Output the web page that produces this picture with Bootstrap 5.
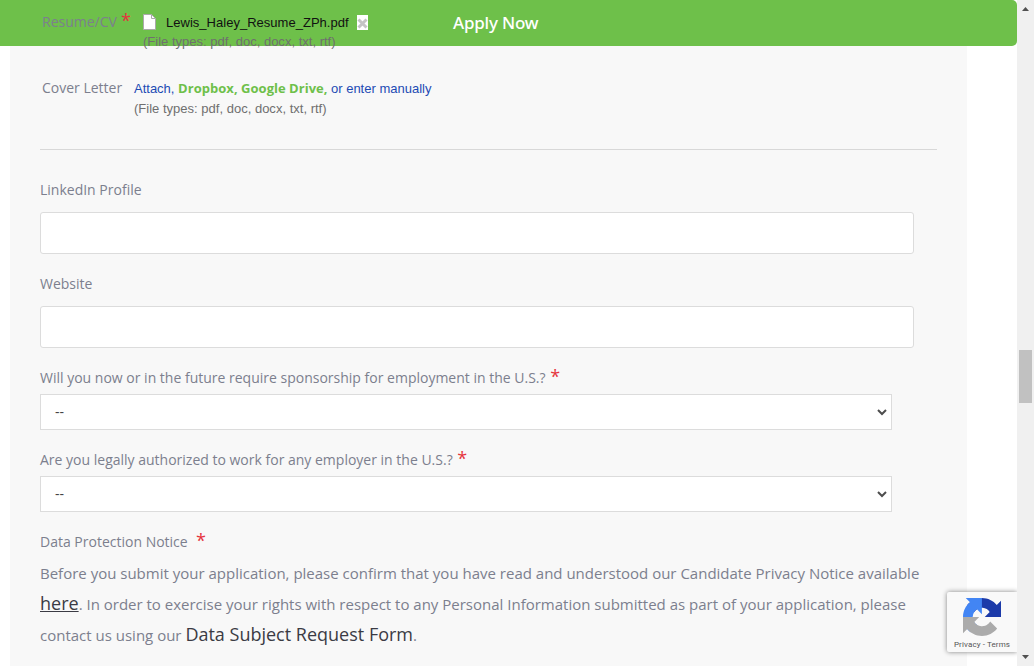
<!DOCTYPE html>
<html lang="en">
<head>
<meta charset="utf-8">
<title>Apply Now</title>
<link href="https://cdn.jsdelivr.net/npm/bootstrap@5.3.0/dist/css/bootstrap.min.css" rel="stylesheet">
<style>
body { font-family: "Open Sans", sans-serif; font-size: 14px; line-height: 20px; color: #7c7f8e; background: #fff; }
.page-area { width: 1017px; }
.apply-bar { height: 46px; background: #6ec04a; border-radius: 0 5px 5px 0; }
.apply-title { font: 500 17px/20px "Noto Sans", sans-serif; letter-spacing: -.2px; color: #fff; left: 453px; top: 13px; }
.form-panel { width: 957px; margin-left: 10px; padding: 12px 30px 0; background: #f8f8f8; }
.form-front { z-index: 2; }
.upload-row { padding-left: 2px; }
.arial-text { font-family: "Liberation Sans", sans-serif; font-size: 13px; }
.file-name { color: #111; margin-left: 10px; width: 191px; line-height: 18px; padding-top: 2px; letter-spacing: .02px; }
.types-note { color: #6f6f6f; letter-spacing: .01px; }
.blue-link { color: #1d4bb4; }
.green-link { color: #6ec04a; font-family: "Open Sans", sans-serif; font-weight: 700; font-size: 13px; letter-spacing: .03px; }
.star { color: #e5343d; font-size: 18px; line-height: 0; margin-left: 1px; }
.rule { height: 1px; background: #d8d8d8; margin-top: 30px; }
.field-label { display: block; height: 20px; }
.text-box { width: 874px; height: 42px; border: 1px solid #dcdcdc; border-radius: 3px; padding: 0 14px; margin: 12px 0 20px; }
.choice { width: 852px; height: 36px; border: 1px solid #dcdcdc; background: #fff; color: #444; padding: 0 4px 0 14px; margin: 6px 0 20px; }
.notice { font-size: 15px; line-height: 31px; width: 890px; margin: 6px 0 0; }
.notice a { font-size: 18px; line-height: 18px; color: #3b3b44; }
.scroll-rail { width: 17px; background: #f0f0f0; }
.scroll-thumb { width: 13px; height: 53px; background: #c1c1c1; margin-top: 334px; }
.captcha { width: 70px; height: 60px; left: 947px; top: 592px; background: #f9f9f9; border-radius: 2px 0 0 2px; box-shadow: 0 0 5px #808080; z-index: 3; clip-path: inset(-8px 0 -8px -8px); }
.captcha svg { margin-top: 6px; }
.captcha-text { font: 8px/10px Roboto, sans-serif; color: #555; margin-top: 4px; letter-spacing: .12px; }
</style>
<script src="https://cdn.jsdelivr.net/npm/bootstrap@5.3.0/dist/js/bootstrap.bundle.min.js"></script>
</head>
<body class="overflow-hidden">
<div class="d-flex vh-100 overflow-hidden">
  <main class="page-area position-relative flex-shrink-0 overflow-hidden">
    <header class="apply-bar position-absolute top-0 start-0 w-100">
      <span class="apply-title position-absolute text-nowrap">Apply Now</span>
    </header>
    <form class="form-panel h-100">
      <div class="form-front position-relative">
        <div class="upload-row d-flex">
          <label class="text-nowrap" style="width:101px">Resume/CV<span class="star" style="margin-left:4px">*</span></label>
          <div class="arial-text">
            <div class="d-flex align-items-center">
              <svg width="13" height="16" viewBox="0 0 13 16"><path d="M.5.5h8l4 4v11H.5z" fill="#fff" stroke="#aaa"/><path d="M8.500.5v4h4" fill="none" stroke="#aaa"/></svg>
              <span class="file-name text-nowrap">Lewis_Haley_Resume_ZPh.pdf</span>
              <svg width="11" height="15" viewBox="0 0 11 15"><path d="M0 0h11v15H0z" fill="#fff"/><path d="M1.500 4.500l8 8m0-8l-8 8" stroke="#c4c4c4" stroke-width="3"/></svg>
            </div>
            <div class="types-note">(File types: pdf, doc, docx, txt, rtf)</div>
          </div>
        </div>
        <div class="upload-row d-flex" style="margin-top:26px">
          <label class="text-nowrap" style="width:92px">Cover Letter</label>
          <div class="arial-text text-nowrap">
            <div style="height:21px"><span class="blue-link">Attach, </span><span class="green-link">Dropbox, Google Drive, </span><span class="blue-link">or enter manually</span></div>
            <div class="types-note">(File types: pdf, doc, docx, txt, rtf)</div>
          </div>
        </div>
        <div class="rule"></div>
        <label class="field-label" style="margin-top:30px" for="li">LinkedIn Profile</label>
        <input id="li" class="text-box d-block bg-white">
        <label class="field-label" for="ws">Website</label>
        <input id="ws" class="text-box d-block bg-white">
        <label class="field-label">Will you now or in the future require sponsorship for employment in the U.S.? <span class="star">*</span></label>
        <div class="choice d-flex align-items-center justify-content-between"><span>--</span><svg width="10" height="7" viewBox="0 0 10 7"><path d="M1 1l4 4 4-4" fill="none" stroke="#4d4d4d" stroke-width="2"/></svg></div>
        <label class="field-label">Are you legally authorized to work for any employer in the U.S.? <span class="star">*</span></label>
        <div class="choice d-flex align-items-center justify-content-between"><span>--</span><svg width="10" height="7" viewBox="0 0 10 7"><path d="M1 1l4 4 4-4" fill="none" stroke="#4d4d4d" stroke-width="2"/></svg></div>
        <label class="field-label">Data Protection Notice&nbsp; <span class="star">*</span></label>
        <p class="notice">Before you submit your application, please confirm that you have read and understood our Candidate Privacy Notice available <a href="#">here</a>. In order to exercise your rights with respect to any Personal Information submitted as part of your application, please contact us using our <a href="#" class="text-decoration-none">Data Subject Request Form</a>.</p>
      </div>
    </form>
    <aside class="captcha position-absolute d-flex flex-column align-items-center">
      <svg width="38" height="38" viewBox="0 0 64 64">
        <path fill="#1c3aa9" d="M64 31.955l-.013-1.370V4.687l-7.160 7.160C50.967 4.674 42.033.093 32.029.093c-10.400 0-19.652 4.960-25.497 12.637l11.736 11.860a15.550 15.550 0 0 1 4.754-5.334c2.050-1.600 4.952-2.906 8.968-2.906.485 0 .860.057 1.135.163 4.976.393 9.288 3.140 11.828 7.124l-8.307 8.307L64 31.953"/>
        <path fill="#4285f4" d="M31.862.094l-1.370.013H4.594l7.160 7.160C4.580 13.127 0 22.061 0 32.065c0 10.400 4.960 19.652 12.637 25.497l11.860-11.736a15.550 15.550 0 0 1-5.334-4.754c-1.600-2.050-2.906-4.952-2.906-8.968 0-.485.057-.860.163-1.135.393-4.976 3.140-9.288 7.124-11.828l8.307 8.307L31.860.095"/>
        <path fill="#ababab" d="M.001 32.045l.013 1.370v25.898l7.160-7.160c5.860 7.173 14.794 11.754 24.798 11.754 10.400 0 19.652-4.960 25.497-12.637L45.733 39.410a15.550 15.550 0 0 1-4.754 5.334c-2.050 1.600-4.952 2.906-8.968 2.906-.485 0-.860-.057-1.135-.163-4.976-.393-9.288-3.140-11.828-7.124l8.307-8.307c-10.522.040-22.400.066-27.295-.005"/>
      </svg>
      <div class="captcha-text text-nowrap">Privacy - Terms</div>
    </aside>
  </main>
  <div class="scroll-rail flex-shrink-0 d-flex flex-column align-items-center">
    <svg width="9" height="16" viewBox="0 0 9 16"><path d="M1 11h7L4.500 7z" fill="#505050"/></svg>
    <div class="scroll-thumb"></div>
    <svg class="mt-auto" width="9" height="16" viewBox="0 0 9 16"><path d="M1 5h7L4.500 9z" fill="#505050"/></svg>
  </div>
</div>
</body>
</html>
